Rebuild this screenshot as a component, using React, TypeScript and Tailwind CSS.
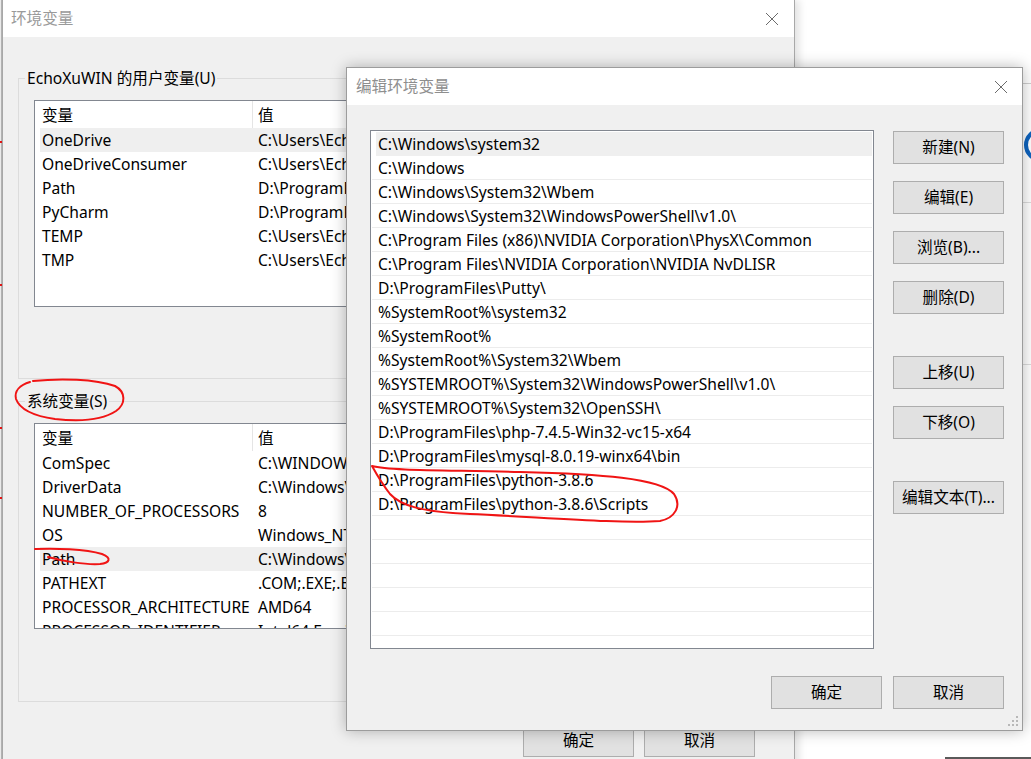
import type { ReactNode } from 'react';

const USER_VARS = [
  ['OneDrive', 'C:\\Users\\EchoXu\\OneDrive'],
  ['OneDriveConsumer', 'C:\\Users\\EchoXu\\OneDrive'],
  ['Path', 'D:\\ProgramFiles\\PyCharm\\bin;'],
  ['PyCharm', 'D:\\ProgramFiles\\PyCharm\\bin;'],
  ['TEMP', 'C:\\Users\\EchoXu\\AppData\\Local\\Temp'],
  ['TMP', 'C:\\Users\\EchoXu\\AppData\\Local\\Temp'],
];

const SYSTEM_VARS = [
  ['ComSpec', 'C:\\WINDOWS\\system32\\cmd.exe'],
  ['DriverData', 'C:\\Windows\\System32\\Drivers\\DriverData'],
  ['NUMBER_OF_PROCESSORS', '8'],
  ['OS', 'Windows_NT'],
  ['Path', 'C:\\Windows\\system32;C:\\Windows'],
  ['PATHEXT', '.COM;.EXE;.BAT;.CMD;.VBS'],
  ['PROCESSOR_ARCHITECTURE', 'AMD64'],
  ['PROCESSOR_IDENTIFIER', 'Intel64 Family 6 Model 158'],
];

const PATHS = [
  'C:\\Windows\\system32',
  'C:\\Windows',
  'C:\\Windows\\System32\\Wbem',
  'C:\\Windows\\System32\\WindowsPowerShell\\v1.0\\',
  'C:\\Program Files (x86)\\NVIDIA Corporation\\PhysX\\Common',
  'C:\\Program Files\\NVIDIA Corporation\\NVIDIA NvDLISR',
  'D:\\ProgramFiles\\Putty\\',
  '%SystemRoot%\\system32',
  '%SystemRoot%',
  '%SystemRoot%\\System32\\Wbem',
  '%SYSTEMROOT%\\System32\\WindowsPowerShell\\v1.0\\',
  '%SYSTEMROOT%\\System32\\OpenSSH\\',
  'D:\\ProgramFiles\\php-7.4.5-Win32-vc15-x64',
  'D:\\ProgramFiles\\mysql-8.0.19-winx64\\bin',
  'D:\\ProgramFiles\\python-3.8.6',
  'D:\\ProgramFiles\\python-3.8.6\\Scripts',
  '',
  '',
  '',
  '',
  '',
  '',
];

function Btn({ children, className = '' }: { children: ReactNode; className?: string }) {
  return (
    <div
      className={`flex h-[33px] w-[111px] shrink-0 items-center justify-center border border-[#adadad] bg-[#e1e1e1] pt-px text-black ${className}`}
    >
      {children}
    </div>
  );
}

function CloseX() {
  return (
    <svg width="14" height="14" viewBox="0 0 14 14" className="text-[#6b6b6b]">
      <path d="M1 1L13 13M13 1L1 13" stroke="currentColor" strokeWidth="1" />
    </svg>
  );
}

function VarList({ rows, selected, className = '' }: { rows: string[][]; selected: number; className?: string }) {
  return (
    <div className={`w-[740px] overflow-hidden border border-[#828790] bg-white ${className}`}>
      <div className="flex h-[27px] items-center">
        <div className="flex h-full w-[218px] items-center border-r border-[#e5e5e5] pl-[7px] pt-[2px]">变量</div>
        <div className="pl-[5px] pt-[2px]">值</div>
      </div>
      {rows.map(([name, value], i) => (
        <div
          key={name + i}
          className={`ml-[5px] flex h-6 items-center whitespace-nowrap pt-[2px] ${i === selected ? 'bg-[#efefef]' : ''}`}
        >
          <div className="w-[218px] shrink-0 pl-[2px]">{name}</div>
          <div>{value}</div>
        </div>
      ))}
    </div>
  );
}

function GroupBox({ title, children, className = '' }: { title: string; children: ReactNode; className?: string }) {
  return (
    <fieldset className={`ml-[15px] w-[762px] border border-[#dcdcdc] pl-[15px] ${className}`}>
      <legend className="-ml-[9px] h-5 px-[2px] leading-5">{title}</legend>
      {children}
    </fieldset>
  );
}

export default function App() {
  return (
    <div className="relative h-[759px] w-[1031px] overflow-hidden bg-white font-['Noto_Sans','Noto_Sans_CJK_SC',sans-serif] text-[15.6px] text-black">
      {/* window behind, left edge */}
      <div className="absolute left-0 top-0 h-full w-[2px] border-r border-[#b5b5b5] bg-[#ececec]" />

      {/* window behind, right edge */}
      <div className="absolute left-[1022px] top-[83px] h-px w-[9px] bg-[#cfcfcf]" />
      <div className="absolute left-[1022px] top-[202px] h-px w-[9px] bg-[#dcdcdc]" />
      <div className="absolute left-[1022px] top-[364px] h-px w-[9px] bg-[#dcdcdc]" />
      <div className="absolute left-[1024px] top-[128px] h-[34px] w-[34px] rounded-full border-[4px] border-[#0e63be]" />
      <div className="absolute left-[945px] top-[757px] h-[2px] w-[86px] bg-[#5a5a5a]" />

      {/* 环境变量 */}
      <div className="absolute left-[2px] top-0 flex h-[800px] w-[793px] flex-col border-x border-[#a8a8a8] shadow-[4px_0_8px_rgba(0,0,0,0.12)]">
        <div className="flex h-[37px] shrink-0 items-center justify-between bg-white pl-[8px] pr-[15px]">
          <span className="text-[#9a9a9a]">环境变量</span>
          <CloseX />
        </div>
        <div className="flex flex-1 flex-col bg-[#f0f0f0]">
          <GroupBox title="EchoXuWIN 的用户变量(U)" className="mt-[31px] h-[311px]">
            <VarList rows={USER_VARS} selected={0} className="mt-[12px] h-[207px]" />
          </GroupBox>
          <GroupBox title="系统变量(S)" className="mt-[12px] h-[311px]">
            <VarList rows={SYSTEM_VARS} selected={4} className="mt-[12px] h-[206px]" />
          </GroupBox>
          <div className="mt-[22px] flex gap-[10px] pl-[520px]">
            <Btn>确定</Btn>
            <Btn>取消</Btn>
          </div>
        </div>
      </div>

      {/* 编辑环境变量 */}
      <div className="absolute left-[346px] top-[67px] flex h-[664px] w-[677px] flex-col border border-[#9c9c9c] bg-[#f0f0f0] shadow-[0_0_14px_rgba(0,0,0,0.28)]">
        <div className="flex h-[37px] shrink-0 items-center justify-between bg-white pl-[9px] pr-[14px]">
          <span className="text-[#8e8e8e]">编辑环境变量</span>
          <CloseX />
        </div>
        <div className="mt-[25px] flex pl-[23px]">
          <div className="h-[519px] w-[504px] overflow-hidden border border-[#828790] bg-white px-px pt-px">
            {PATHS.map((p, i) => (
              <div
                key={i}
                className={`flex h-6 items-center whitespace-nowrap pt-[2px] ${
                  i === 0 ? 'ml-[4px] bg-[#efefef] pl-[2px]' : 'border-b border-[#ececec] pl-[6px]'
                }`}
              >
                {p}
              </div>
            ))}
          </div>
          <div className="ml-[19px] mt-px flex flex-col">
            <Btn>新建(N)</Btn>
            <Btn className="mt-[17px]">编辑(E)</Btn>
            <Btn className="mt-[17px]">浏览(B)...</Btn>
            <Btn className="mt-[17px]">删除(D)</Btn>
            <Btn className="mt-[42px]">上移(U)</Btn>
            <Btn className="mt-[17px]">下移(O)</Btn>
            <Btn className="mt-[42px]">编辑文本(T)...</Btn>
          </div>
        </div>
        <div className="mt-[27px] flex justify-end gap-[11px] pr-[18px]">
          <Btn>确定</Btn>
          <Btn>取消</Btn>
        </div>
        <svg width="12" height="12" viewBox="0 0 12 12" className="absolute bottom-[2px] right-[2px]">
          <g fill="#b8b8b8">
            <rect x="8" y="0" width="2" height="2" />
            <rect x="4" y="4" width="2" height="2" />
            <rect x="8" y="4" width="2" height="2" />
            <rect x="0" y="8" width="2" height="2" />
            <rect x="4" y="8" width="2" height="2" />
            <rect x="8" y="8" width="2" height="2" />
          </g>
        </svg>
      </div>

      {/* red annotations */}
      <svg className="pointer-events-none absolute inset-0" width="1031" height="759" viewBox="0 0 1031 759">
        <g fill="none" stroke="#f01414" strokeWidth="2" strokeLinecap="round">
          <path d="M33,381 C60,378 95,379 115,386 C126,392 126,404 116,411 C104,419 82,422 55,419 C34,416 20,410 16,399 C14,391 20,385 30,382" />
          <path d="M35,549 C55,548 85,549 102,554 C112,558 110,563 100,564 C85,565 62,561 48,557" />
          <path d="M372,466 C390,471 450,470 520,472 C600,474 660,478 674,494 C682,506 675,518 660,521 C620,524 540,517 470,514 C420,512 400,505 390,494 C383,485 377,475 372,466" />
        </g>
        <g fill="#e01414">
          <rect x="0" y="141" width="2" height="2" />
          <rect x="0" y="284" width="2" height="2" />
          <rect x="0" y="427" width="2" height="2" />
          <rect x="0" y="497" width="2" height="2" />
        </g>
      </svg>
    </div>
  );
}
